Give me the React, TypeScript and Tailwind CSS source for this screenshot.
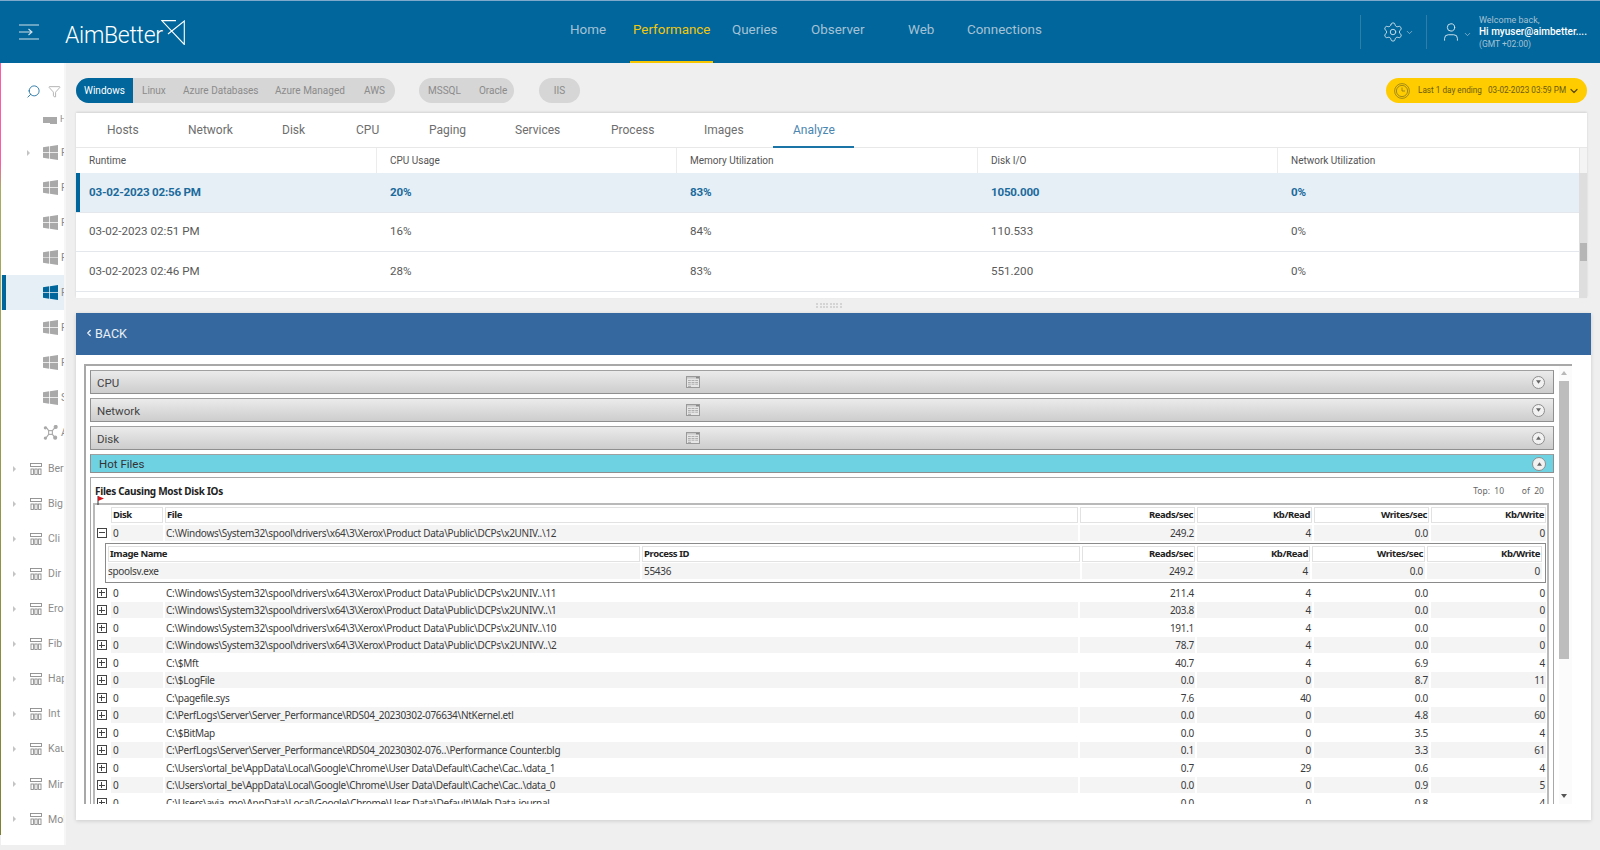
import { ChevronDown, ChevronLeft, Filter, Search, Settings, User } from "lucide-react";

const font = "font-['Roboto',sans-serif]";

const navItems = [
  { label: "Home", cls: "w-[35px] mr-[28px]" },
  { label: "Performance", cls: "w-[77px] mr-[22px]", active: true },
  { label: "Queries", cls: "w-[45px] mr-[34px]" },
  { label: "Observer", cls: "w-[53px] mr-[44px]" },
  { label: "Web", cls: "w-[26px] mr-[33px]" },
  { label: "Connections", cls: "w-[76px]" },
];

const tabs = [
  { label: "Hosts", cls: "w-[30px] mr-[51px]" },
  { label: "Network", cls: "w-[44px] mr-[50px]" },
  { label: "Disk", cls: "w-[22px] mr-[52px]" },
  { label: "CPU", cls: "w-[22px] mr-[51px]" },
  { label: "Paging", cls: "w-[36px] mr-[50px]" },
  { label: "Services", cls: "w-[46px] mr-[50px]" },
  { label: "Process", cls: "w-[42px] mr-[51px]" },
  { label: "Images", cls: "w-[38px] mr-[51px]" },
  { label: "Analyze", cls: "w-[40px]", active: true },
];

const runs = [
  ["03-02-2023 02:56 PM", "20%", "83%", "1050.000", "0%"],
  ["03-02-2023 02:51 PM", "16%", "84%", "110.533", "0%"],
  ["03-02-2023 02:46 PM", "28%", "83%", "551.200", "0%"],
];

const hostRows = [
  { kind: "win", label: "F", arrow: true },
  { kind: "win", label: "F" },
  { kind: "win", label: "F" },
  { kind: "win", label: "F" },
  { kind: "win", label: "F", active: true },
  { kind: "win", label: "F" },
  { kind: "win", label: "F" },
  { kind: "win", label: "S" },
  { kind: "net", label: "A" },
];

const groups = ["Ber", "Big", "Cli", "Dir", "Ero", "Fib", "Hap", "Int", "Kau", "Mir", "Mol"];

const fileRows = [
  ["C:\\Windows\\System32\\spool\\drivers\\x64\\3\\Xerox\\Product Data\\Public\\DCPs\\x2UNIV..\\11", "211.4", "4", "0.0", "0"],
  ["C:\\Windows\\System32\\spool\\drivers\\x64\\3\\Xerox\\Product Data\\Public\\DCPs\\x2UNIVV..\\1", "203.8", "4", "0.0", "0"],
  ["C:\\Windows\\System32\\spool\\drivers\\x64\\3\\Xerox\\Product Data\\Public\\DCPs\\x2UNIV..\\10", "191.1", "4", "0.0", "0"],
  ["C:\\Windows\\System32\\spool\\drivers\\x64\\3\\Xerox\\Product Data\\Public\\DCPs\\x2UNIVV..\\2", "78.7", "4", "0.0", "0"],
  ["C:\\$Mft", "40.7", "4", "6.9", "4"],
  ["C:\\$LogFile", "0.0", "0", "8.7", "11"],
  ["C:\\pagefile.sys", "7.6", "40", "0.0", "0"],
  ["C:\\PerfLogs\\Server\\Server_Performance\\RDS04_20230302-076634\\NtKernel.etl", "0.0", "0", "4.8", "60"],
  ["C:\\$BitMap", "0.0", "0", "3.5", "4"],
  ["C:\\PerfLogs\\Server\\Server_Performance\\RDS04_20230302-076..\\Performance Counter.blg", "0.1", "0", "3.3", "61"],
  ["C:\\Users\\ortal_be\\AppData\\Local\\Google\\Chrome\\User Data\\Default\\Cache\\Cac..\\data_1", "0.7", "29", "0.6", "4"],
  ["C:\\Users\\ortal_be\\AppData\\Local\\Google\\Chrome\\User Data\\Default\\Cache\\Cac..\\data_0", "0.0", "0", "0.9", "5"],
  ["C:\\Users\\avia_mo\\AppData\\Local\\Google\\Chrome\\User Data\\Default\\Web Data-journal", "0.0", "0", "0.8", "4"],
];

function WinIcon({ active }: { active?: boolean }) {
  return (
    <svg viewBox="0 0 16 16" className="w-[15px] h-[15px] shrink-0" fill={active ? "#00669b" : "#a9a9a9"}>
      <path d="M0 2.4 6.6 1.4V7.6H0ZM7.4 1.3 16 0V7.6H7.4ZM0 8.4H6.6V14.6L0 13.6ZM7.4 8.4H16V16L7.4 14.7Z" />
    </svg>
  );
}

function NetIcon() {
  return (
    <svg viewBox="0 0 16 16" className="w-[15px] h-[15px] shrink-0" fill="none" stroke="#a9a9a9" strokeWidth="1.2">
      <path d="M3 2 6.5 6.5M13 2.5 9.5 6.5M3 14 6.5 9.5M12.5 13 9.5 9.5" />
      <rect x="6" y="6" width="4" height="4" />
      <circle cx="2.5" cy="3" r="1.1" fill="#a9a9a9" />
      <circle cx="13.5" cy="2" r="1.6" fill="#a9a9a9" />
      <circle cx="2.5" cy="14" r="1.1" fill="#a9a9a9" />
      <circle cx="13" cy="13.5" r="1.6" fill="#a9a9a9" />
    </svg>
  );
}

function GroupIcon() {
  return (
    <svg viewBox="0 0 12 12" className="w-[12px] h-[12px] shrink-0" fill="none" stroke="#8c8c8c" strokeWidth="0.9">
      <rect x="0.5" y="0.5" width="11" height="3" />
      <rect x="1" y="6" width="2.4" height="5.5" />
      <rect x="4.8" y="6" width="2.4" height="5.5" />
      <rect x="8.6" y="6" width="2.4" height="5.5" />
    </svg>
  );
}

function TableGlyph() {
  return (
    <svg viewBox="0 0 14 12" className="w-[14px] h-[12px]">
      <rect x="0.5" y="0.5" width="13" height="11" fill="#e6e6e6" stroke="#9a9a9a" />
      <rect x="1" y="1" width="12" height="1.6" fill="#c8c8c8" />
      <rect x="10" y="1" width="3" height="1.4" fill="#888" />
      <path d="M2 4.5H12M2 6.5H12M2 8.2H12" stroke="#a8a8a8" strokeWidth="0.9" />
      <path d="M5.2 3.5V9M8.8 3.5V9" stroke="#e6e6e6" strokeWidth="0.8" />
      <path d="M2 10.3H5" stroke="#8f8f8f" strokeWidth="0.8" />
    </svg>
  );
}

function RoundToggle({ up, big }: { up?: boolean; big?: boolean }) {
  return (
    <span className={`${big ? "w-[14px] h-[14px]" : "w-[13px] h-[13px]"} rounded-full bg-[#f1f1f1] border border-[#8d8d8d] flex items-center justify-center shrink-0`}>
      <svg viewBox="0 0 6 4" className="w-[5px] h-[4px]" fill="#666">
        {up ? <path d="M3 0 6 4H0Z" /> : <path d="M0 0H6L3 4Z" />}
      </svg>
    </span>
  );
}

function Accordion({ label, up }: { label: string; up?: boolean }) {
  return (
    <div className={`${font} h-[24px] mb-[4px] mr-[18px] flex items-center border border-[#8f8f8f] border-t-[#a0a0a0] bg-gradient-to-b from-[#ebebeb] to-[#cdcdcd] text-[11.5px] text-[#444] pl-[6px] pr-[8px] relative`}>
      <span className="pt-[3px]">{label}</span>
      <span className="absolute left-[595px] top-[5px] flex">
        <TableGlyph />
      </span>
      <span className="ml-auto">
        <RoundToggle up={up} />
      </span>
    </div>
  );
}

function ExpandBox({ open }: { open?: boolean }) {
  return (
    <span className="w-[10px] h-[10px] border border-[#444] flex items-center justify-center relative shrink-0 bg-white">
      <span className="w-[6px] h-px bg-[#444]" />
      {!open && <span className="absolute w-px h-[6px] bg-[#444]" />}
    </span>
  );
}

const numCols = ["w-[115px]", "w-[115px]", "w-[115px]", "w-[115px]"];
const subCols = ["w-[113px]", "w-[113px]", "w-[113px]", "w-[115px]"];

function HeadCell({ cls, children }: { cls: string; children: React.ReactNode }) {
  return (
    <div className={`${cls} h-[16px] border border-[#e2e2e2] bg-white flex items-center px-[1px] text-[9.5px] tracking-[-0.4px] font-bold text-[#222] shrink-0`}>
      {children}
    </div>
  );
}

function DataRow({ row, shaded, open }: { row: string[]; shaded?: boolean; open?: boolean }) {
  const bg = shaded ? "bg-[#f4f4f4]" : "bg-white";
  return (
    <div className="flex items-center h-[17.5px] gap-[2px] shrink-0">
      <div className="w-[11px] mr-[2px] flex items-center justify-center shrink-0">
        <ExpandBox open={open} />
      </div>
      <div className={`w-[52px] h-[16px] ${bg} px-[2px] leading-[16px] shrink-0`}>0</div>
      <div className={`w-[913px] h-[16px] ${bg} px-[1px] leading-[16px] truncate shrink-0`}>{row[0]}</div>
      {numCols.map((c, i) => (
        <div key={i} className={`${c} h-[16px] ${bg} text-right px-[1px] leading-[16px] shrink-0`}>
          {row[i + 1]}
        </div>
      ))}
    </div>
  );
}

export default function App() {
  return (
    <div className={`${font} w-[1600px] h-[850px] overflow-hidden bg-[#efefef] flex flex-col`}>
      {/* top bar */}
      <header className="h-[63px] shrink-0 bg-[#00669b] border-t border-[#7fa9cc] flex items-center relative text-white">
        <svg viewBox="0 0 20 16" className="w-[20px] h-[16px] ml-[19px] mr-[26px]" fill="none" stroke="#cfe0ea" strokeWidth="1.1">
          <path d="M0 1H20M0 15H20M0 8H13M9.5 5 13 8 9.5 11" />
        </svg>
        <div className="flex items-start h-[24px] -mt-[1px]">
          <span className="text-[23px] font-light leading-none mt-[4px] tracking-[-0.3px]">AimBetter</span>
          <svg viewBox="0 0 24 25" className="w-[24px] h-[25px] ml-[-2px] shrink-0" fill="none" stroke="#fff" strokeWidth="1.1">
            <path d="M15 0.6H0.8L23.3 24.5V1L7 14" />
          </svg>
        </div>
        <nav className="absolute left-[570px] top-0 h-[62px] flex items-start">
          {navItems.map((n) => (
            <div key={n.label} className={`${n.cls} relative h-[62px] pt-[19px] text-[13.4px] font-normal whitespace-nowrap ${n.active ? "text-[#f2c80f]" : "text-[#a6c2d6]"}`}>
              {n.label}
              {n.active && <span className="absolute left-[-3px] right-[-3px] bottom-0 h-[2px] bg-[#f7c600]" />}
            </div>
          ))}
        </nav>
        <div className="ml-auto flex items-center h-full pr-[17px]">
          <span className="w-px h-[34px] bg-[#2d7fa9]" />
          <Settings className="ml-[21px] w-[22px] h-[22px] text-[#cfe0ea]" strokeWidth={1} />
          <ChevronDown className="ml-[1px] w-[9px] h-[9px] text-[#9cc0d5]" />
          <span className="w-px h-[34px] bg-[#2d7fa9] ml-[12px]" />
          <User className="ml-[13px] w-[22px] h-[24px] text-[#dfeaf1]" strokeWidth={1} />
          <ChevronDown className="ml-[1px] w-[9px] h-[9px] mt-[4px] text-[#9cc0d5]" />
          <div className="ml-[7px] flex flex-col leading-[12px] w-[104px]">
            <span className="text-[#a6c2d6] text-[9px]">Welcome back,</span>
            <span className="text-white text-[10px] font-medium whitespace-nowrap">Hi myuser@aimbetter....</span>
            <span className="text-[#a6c2d6] text-[8.5px]">(GMT +02:00)</span>
          </div>
        </div>
      </header>

      <div className="flex flex-1 min-h-0">
        <div className="w-px h-[772px] shrink-0 bg-[linear-gradient(#ff5aa5_0,#ff5aa5_100px,#a9ad5f_125px,#7f8132_770px)]" />
        {/* left host list */}
        <aside className="w-[65px] h-[782px] shrink-0 bg-white border-r-[2px] border-[#f6f6f6] text-[10.5px] text-[#8c8c8c] overflow-hidden">
          <div className="h-[52px] flex items-center justify-end pr-[3px] gap-[7px] pt-[4px]">
            <Search className="w-[15px] h-[15px] text-[#1d6f9f] -scale-x-100" strokeWidth={1.4} />
            <Filter className="w-[13px] h-[13px] text-[#8e8e8e]" strokeWidth={1.2} />
          </div>
          <div className="h-[10px] pl-[42px] flex items-end overflow-hidden">
            <div className="flex items-center gap-[3px] h-[10px] -mt-[3px]">
              <span className="w-[7px] h-[6px] bg-[#a9a9a9]" />
              <span className="w-[7px] h-[7px] bg-[#a9a9a9] -ml-[3px]" />
              <span className="text-[9px]">H</span>
            </div>
          </div>
          <div className="mt-[10px]">
            {hostRows.map((h, i) => (
              <div key={i} className={`h-[35px] flex items-center relative ${h.active ? "bg-[#e6eff5]" : ""}`}>
                {h.active && <span className="absolute left-[1px] top-0 bottom-0 w-[4px] bg-[#00669b]" />}
                {h.arrow && <span className="absolute left-[26px] w-0 h-0 border-y-[3px] border-y-transparent border-l-[3px] border-l-[#c4c4c4]" />}
                <span className="ml-[42px] flex items-center gap-[3px] w-[21px] overflow-hidden">
                  {h.kind === "win" ? <WinIcon active={h.active} /> : <NetIcon />}
                  <span>{h.label}</span>
                </span>
              </div>
            ))}
          </div>
          <div className="mt-[1px]">
            {groups.map((g) => (
              <div key={g} className="h-[35.1px] flex items-center relative">
                <span className="absolute left-[12px] w-0 h-0 border-y-[3px] border-y-transparent border-l-[3px] border-l-[#c4c4c4]" />
                <span className="ml-[29px] flex items-center gap-[6px] w-[34px] overflow-hidden">
                  <GroupIcon />
                  <span>{g}</span>
                </span>
              </div>
            ))}
          </div>
        </aside>

        {/* main */}
        <main className="flex-1 min-w-0 pl-[10px] pr-[9px] flex flex-col">
          {/* filter pills */}
          <div className="h-[50px] shrink-0 flex items-center justify-between text-[10px] pr-[4px] pt-[5px]">
            <div className="flex items-center gap-[24px] text-[#8b8b8b]">
              <div className="h-[25px] w-[319px] rounded-full bg-[#d6d6d6] flex items-center overflow-hidden">
                <span className="w-[57px] h-full bg-[#00669b] text-white flex items-center justify-center">Windows</span>
                <span className="ml-[9px] w-[24px]">Linux</span>
                <span className="ml-[17px] w-[75px] whitespace-nowrap">Azure Databases</span>
                <span className="ml-[17px] w-[70px] whitespace-nowrap">Azure Managed</span>
                <span className="ml-[19px]">AWS</span>
              </div>
              <div className="h-[25px] w-[95px] mr-[1px] rounded-full bg-[#d6d6d6] flex items-center pl-[9px] gap-[18px]">
                <span>MSSQL</span>
                <span>Oracle</span>
              </div>
              <div className="h-[25px] w-[41px] rounded-full bg-[#d6d6d6] flex items-center justify-center">IIS</div>
            </div>
            <div className="h-[25px] w-[201px] rounded-full bg-[#ffcc00] flex items-center pl-[8px] text-[#6b5a10] text-[8.2px] whitespace-nowrap">
              <svg viewBox="0 0 16 16" className="w-[16px] h-[16px] mr-[8px] shrink-0" fill="none" stroke="#8c7a1c" strokeWidth="0.8">
                <circle cx="8" cy="8" r="7.4" />
                <circle cx="8" cy="8" r="5.6" />
                <path d="M8 4.5V8H11" />
              </svg>
              <span>Last 1 day ending</span>
              <span className="ml-[6px]">03-02-2023 03:59 PM</span>
              <ChevronDown className="ml-[2px] w-[12px] h-[12px] shrink-0 text-[#5a4a0a]" strokeWidth={2.4} />
            </div>
          </div>

          {/* analyze card */}
          <section className="h-[185px] w-[1511px] shrink-0 bg-white shadow-[0_-1px_2px_rgba(0,0,0,0.12)] flex flex-col overflow-hidden">
            <div className="h-[35px] shrink-0 flex border-b border-[#e8e8e8] pl-[31px] text-[12px] text-[#6e6e6e]">
              {tabs.map((t) => (
                <div key={t.label} className={`${t.cls} relative h-full flex items-center whitespace-nowrap ${t.active ? "text-[#4a86b0]" : ""}`}>
                  {t.label}
                  {t.active && <span className="absolute left-[-20px] right-[-21px] bottom-[-1px] h-[2px] bg-[#1b74a6]" />}
                </div>
              ))}
            </div>
            <div className="flex flex-1 min-h-0">
              <div className="flex-1 min-w-0">
                <div className="h-[25px] grid grid-cols-[301px_300px_301px_300px_1fr] text-[10px] text-[#555]">
                  {["Runtime", "CPU Usage", "Memory Utilization", "Disk I/O", "Network Utilization"].map((c, i) => (
                    <div key={c} className={`flex items-center pl-[13px] ${i < 4 ? "border-r border-[#ececec]" : ""}`}>{c}</div>
                  ))}
                </div>
                {runs.map((r, i) => (
                  <div key={r[0]} className={`relative h-[39.5px] grid grid-cols-[301px_300px_301px_300px_1fr] items-center text-[11.6px] border-b border-[#e4e8ec] ${i === 0 ? "bg-[#e6eff5] font-bold tracking-[-0.2px] text-[#1b6a9c]" : "text-[#5a5a5a]"}`}>
                    {i === 0 && <span className="absolute left-0 top-0 bottom-0 w-[4px] bg-[#00669b]" />}
                    {r.map((v, j) => (
                      <div key={j} className="pl-[13px]">{v}</div>
                    ))}
                  </div>
                ))}
              </div>
              <div className="w-[8px] shrink-0 flex flex-col">
                <div className="h-[25px] bg-[#f4f4f4] border-l border-[#e6e6e6]" />
                <div className="flex-1 bg-[#dedede] pt-[70px] pl-[1px]">
                  <div className="h-[18px] bg-[#b5b5b5]" />
                </div>
              </div>
            </div>
          </section>

          {/* splitter */}
          <div className="h-[15px] shrink-0 flex items-center justify-center w-[1506px]">
            <div className="grid grid-cols-[repeat(8,2px)] gap-x-[1.3px] gap-y-px">
              {Array.from({ length: 16 }).map((_, i) => (
                <span key={i} className="w-[2px] h-[2px] bg-[#d4d4d4]" />
              ))}
            </div>
          </div>

          {/* drill down card */}
          <section className="h-[507px] w-[1515px] shrink-0 bg-white shadow-[0_1px_4px_rgba(0,0,0,0.15)] flex flex-col">
            <div className="h-[42px] shrink-0 bg-[#35689f] text-white/90 flex items-center text-[12.5px] pl-[8px]">
              <ChevronLeft className="w-[10px] h-[10px] -mt-[3px]" strokeWidth={3} />
              <span className="ml-[1px]">BACK</span>
            </div>
            <div className="mt-[9px] ml-[8px] h-[440px] w-[1488px] border-t-[2px] border-[#a8a8a8] border-l-[2px] pt-[4px] pl-[4px] relative overflow-hidden font-['Noto_Sans',sans-serif]">
              <Accordion label="CPU" />
              <Accordion label="Network" />
              <Accordion label="Disk" up />
              <div className={`${font} h-[19px] mb-[4px] mr-[18px] flex items-center border border-[#8f8f8f] border-t-[#a0a0a0] bg-[#6fd2e3] text-[11.5px] text-[#333] pl-[8px] pr-[7px]`}>
                <span className="pt-[2px]">Hot Files</span>
                <span className="ml-auto"><RoundToggle up big /></span>
              </div>

              <div className="mr-[18px] border border-[#a8a8a8] h-[340px] overflow-hidden pl-[2px] text-[10px] tracking-[-0.3px] text-[#3a3a3a]">
                <div className="h-[25px] flex items-center justify-between pr-[9px] pt-[2px] pl-[2px]">
                  <span className="text-[10px] font-bold text-[#222]">Files Causing Most Disk IOs</span>
                  <span className="text-[8.5px] tracking-normal text-[#666]">Top:&nbsp; 10 &nbsp;&nbsp;&nbsp;&nbsp;&nbsp;&nbsp; of&nbsp; 20</span>
                </div>
                <span className="absolute left-[11px] top-[130px] block">
                  <svg viewBox="0 0 8 9" className="w-[8px] h-[9px]">
                    <path d="M1 0V9" stroke="#333" />
                    <path d="M1 0 7 2.5 1 5Z" fill="#d3141c" />
                  </svg>
                </span>
                <div className="border-l-[2px] border-t-[2px] border-r-[2px] border-[#b9b9b9] w-[1456px] h-[320px] overflow-hidden pl-[1px]">
                  <div className="flex gap-[2px] pt-[2px] pl-[15px]">
                    <HeadCell cls="w-[52px]">Disk</HeadCell>
                    <HeadCell cls="w-[913px]">File</HeadCell>
                    {["Reads/sec", "Kb/Read", "Writes/sec", "Kb/Write"].map((h, i) => (
                      <HeadCell key={h} cls={`${numCols[i]} justify-end`}>{h}</HeadCell>
                    ))}
                  </div>
                  <div className="mt-[1px]">
                    <DataRow open shaded row={["C:\\Windows\\System32\\spool\\drivers\\x64\\3\\Xerox\\Product Data\\Public\\DCPs\\x2UNIV..\\12", "249.2", "4", "0.0", "0"]} />
                  </div>
                  <div className="ml-[9px] mt-[1.5px] mb-[1px] w-[1441px] h-[40px] border border-[#8a8a8a] pl-[2px] pt-[2px]">
                    <div className="flex gap-[2px]">
                      <HeadCell cls="w-[532px]">Image Name</HeadCell>
                      <HeadCell cls="w-[438px]">Process ID</HeadCell>
                      {["Reads/sec", "Kb/Read", "Writes/sec", "Kb/Write"].map((h, i) => (
                        <HeadCell key={h} cls={`${subCols[i]} justify-end`}>{h}</HeadCell>
                      ))}
                    </div>
                    <div className="flex gap-[2px] mt-[1px]">
                      <div className="w-[532px] h-[16px] bg-[#f4f4f4] leading-[16px]">spoolsv.exe</div>
                      <div className="w-[438px] h-[16px] bg-[#f4f4f4] px-[2px] leading-[16px]">55436</div>
                      {["249.2", "4", "0.0", "0"].map((v, i) => (
                        <div key={i} className={`${subCols[i]} h-[16px] bg-[#f4f4f4] text-right px-[2px] leading-[16px]`}>{v}</div>
                      ))}
                    </div>
                  </div>
                  {fileRows.map((r, i) => (
                    <DataRow key={r[0]} row={r} shaded={i % 2 === 1} />
                  ))}
                </div>
              </div>

              {/* scroll bar */}
              <div className="absolute right-0 top-0 bottom-0 w-[13px] bg-[#fbfbfb] flex flex-col items-start pl-0">
                <span className="mt-[5px] ml-[2px] w-0 h-0 border-x-[3px] border-x-transparent border-b-[4px] border-b-[#b8b8b8]" />
                <span className="mt-[6px] w-[10px] h-[278px] bg-[#bdbdbd]" />
                <span className="mt-auto mb-[6px] ml-[2px] w-0 h-0 border-x-[3px] border-x-transparent border-t-[4px] border-t-[#555]" />
              </div>
            </div>
          </section>
        </main>
      </div>
    </div>
  );
}
